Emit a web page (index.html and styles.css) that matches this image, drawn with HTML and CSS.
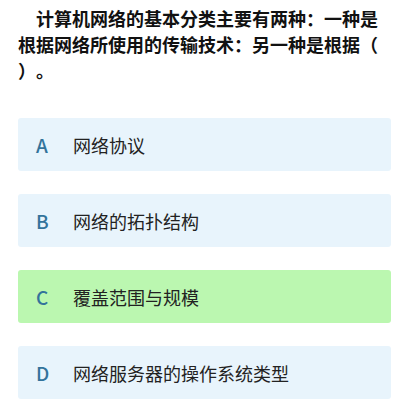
FILE: index.html
```html
<!DOCTYPE html>
<html lang="zh-CN">
<head>
<meta charset="utf-8">
<link rel="stylesheet" href="styles.css">
</head>
<body>
<div class="page">
  <p class="question">计算机网络的基本分类主要有两种：一种是根据网络所使用的传输技术：另一种是根据（ ）。</p>
  <div class="options">
    <div class="option"><span class="letter">A</span><span class="text">网络协议</span></div>
    <div class="option"><span class="letter">B</span><span class="text">网络的拓扑结构</span></div>
    <div class="option correct"><span class="letter">C</span><span class="text">覆盖范围与规模</span></div>
    <div class="option"><span class="letter">D</span><span class="text">网络服务器的操作系统类型</span></div>
  </div>
</div>
</body>
</html>
```
FILE: styles.css
```css
html, body {
  margin: 0;
  padding: 0;
  background: #ffffff;
}
body {
  font-family: "Noto Sans CJK SC", "Noto Sans", sans-serif;
  color: #1a1a1a;
  text-spacing-trim: space-all;
}
.page {
  padding: 5px 18px 0 18px;
}
.question {
  margin: 0;
  font-size: 18px;
  line-height: 26px;
  font-weight: bold;
  text-indent: 1em;
  color: #111;
  line-break: anywhere;
}
.options {
  margin-top: 35px;
  display: flex;
  flex-direction: column;
  gap: 23px;
}
.option {
  display: flex;
  align-items: center;
  height: 53px;
  padding: 0 18px;
  background: #e8f4fc;
  border-radius: 3px;
  font-size: 18px;
}
.option.correct {
  background: #bbf7b0;
}
.letter {
  width: 37px;
  color: #33739b;
  font-family: "Noto Sans CJK SC", sans-serif;
  font-weight: 500;
  font-size: 19px;
}
.text {
  color: #222;
}
```
